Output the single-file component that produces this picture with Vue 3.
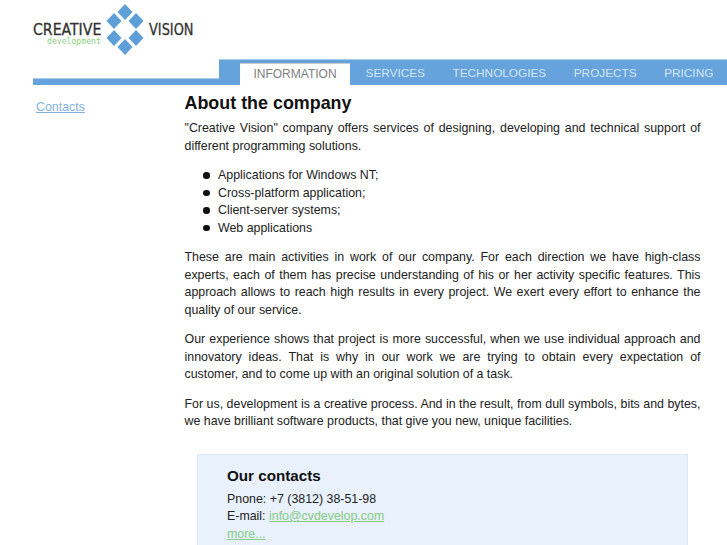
<script setup>
const tabs = [
  { label: 'INFORMATION', active: true },
  { label: 'SERVICES' },
  { label: 'TECHNOLOGIES' },
  { label: 'PROJECTS' },
  { label: 'PRICING' }
]
const diamonds = [[23, 13], [12, 22], [34, 22], [12, 39], [34, 39], [23, 48]]
const items = ['Applications for Windows NT;', 'Cross-platform application;', 'Client-server systems;', 'Web applications']
</script>

<template>
  <div class="page">
    <header class="header">
      <div class="logo">
        <div class="word-left">
          <span class="word">CREATIVE</span>
          <span class="dev">development</span>
        </div>
        <svg class="mark" width="46" height="60" viewBox="0 0 46 60">
          <path
            v-for="d in diamonds"
            :key="d.join()"
            :d="`M${d[0]} ${d[1] - 8}L${d[0] + 7.5} ${d[1]}L${d[0]} ${d[1] + 8}L${d[0] - 7.5} ${d[1]}Z`"
            fill="#5f9fd8"
          />
        </svg>
        <span class="word">VISION</span>
      </div>
    </header>

    <div class="navrow">
      <div class="strip"></div>
      <nav class="nav">
        <a v-for="t in tabs" :key="t.label" class="tab" :class="{ active: t.active }">{{ t.label }}</a>
      </nav>
    </div>

    <div class="main">
      <aside class="side"><a class="side-link">Contacts</a></aside>
      <main class="content">
        <h1>About the company</h1>
        <p>"Creative Vision" company offers services of designing, developing and technical support of different programming solutions.</p>
        <ul>
          <li v-for="i in items" :key="i">{{ i }}</li>
        </ul>
        <p>These are main activities in work of our company. For each direction we have high-class experts, each of them has precise understanding of his or her activity specific features. This approach allows to reach high results in every project. We exert every effort to enhance the quality of our service.</p>
        <p>Our experience shows that project is more successful, when we use individual approach and innovatory ideas. That is why in our work we are trying to obtain every expectation of customer, and to come up with an original solution of a task.</p>
        <p>For us, development is a creative process. And in the result, from dull symbols, bits and bytes, we have brilliant software products, that give you new, unique facilities.</p>
        <section class="box">
          <h2>Our contacts</h2>
          <div>Pnone: +7 (3812) 38-51-98</div>
          <div>E-mail: <a class="green">info@cvdevelop.com</a></div>
          <div><a class="green">more...</a></div>
        </section>
      </main>
    </div>
  </div>
</template>

<style>
html, body { margin: 0; background: #fff; overflow: hidden; }
</style>

<style scoped>
.page {
  width: 727px;
  height: 545px;
  overflow: hidden;
  font-family: "Liberation Sans", Arial, sans-serif;
  font-size: 12.4px;
  line-height: 17.5px;
  color: #222;
}
.header { height: 59px; padding-left: 33px; box-sizing: border-box; }
.logo { display: flex; align-items: flex-start; }
.word-left { display: flex; flex-direction: column; width: 69px; flex: none; padding-top: 23px; }
.word {
  font-family: "DejaVu Sans", sans-serif;
  font-stretch: condensed;
  font-size: 16.5px;
  line-height: 14px;
  color: #333;
  white-space: nowrap;
  transform: scaleX(0.95);
  transform-origin: left center;
  -webkit-text-stroke: 0.3px #333;
}
.dev {
  font-family: "DejaVu Sans Mono", monospace;
  font-size: 8.15px;
  line-height: 8px;
  color: #8ccf82;
  white-space: nowrap;
  margin-left: 14px;
}
.mark { flex: none; margin-top: -1px; }
.logo > .word { margin-top: 23px; margin-left: 1px; transform: scaleX(0.87); }
.navrow { display: flex; align-items: flex-end; height: 26px; margin-left: 33px; }
.strip {
  width: 186px;
  flex: none;
  height: 7px;
  box-sizing: border-box;
  background: #66a3dc;
  border-top: 1px solid #a9cdec;
}
.nav {
  flex: 1;
  height: 26px;
  box-sizing: border-box;
  background: #66a3dc;
  border-top: 1px solid #a9cdec;
  border-right: 1px solid #c3dcf2;
  padding: 3px 0 0 21px;
  display: flex;
}
.tab {
  height: 22px;
  line-height: 21px;
  padding: 0 13.75px;
  color: #d4e5f6;
  font-size: 11.8px;
  white-space: nowrap;
}
.tab.active {
  background: #fff;
  color: #808080;
  padding: 0;
  border-top: 1px solid #ccc;
  box-sizing: border-box;
  width: 110px;
  text-align: center;
  margin-right: 1.8px;
  font-size: 12px;
}
.main { display: flex; }
.side { width: 184.5px; padding: 12px 0 0 36px; box-sizing: border-box; flex: none; }
.side-link { color: #7fb2e3; text-decoration: underline; line-height: 17.5px; position: relative; top: 2px; }
.content { width: 516px; flex: none; }
h1 { margin: 8px 0 7px; font-size: 17.9px; line-height: 20px; font-weight: bold; color: #111; }
p { margin: 0 0 12px; text-align: justify; }
ul { margin: 0 0 12px; padding-left: 33.5px; list-style: none; }
li { position: relative; }
li::before {
  content: "";
  position: absolute;
  left: -15px;
  top: 5px;
  width: 6.5px;
  height: 6.5px;
  border-radius: 50%;
  background: #111;
}
.box {
  margin-top: 23px;
  margin-left: 12.5px;
  width: 491px;
  box-sizing: border-box;
  height: 120px;
  background: #e8f1fc;
  border: 1px solid #dde8f5;
  padding: 12px 29px;
}
h2 { margin: 0 0 6px; font-size: 15.2px; line-height: 18px; font-weight: bold; color: #111; }
.box > div { line-height: 17.6px; }
.green { color: #86cc86; text-decoration: underline; }
</style>
